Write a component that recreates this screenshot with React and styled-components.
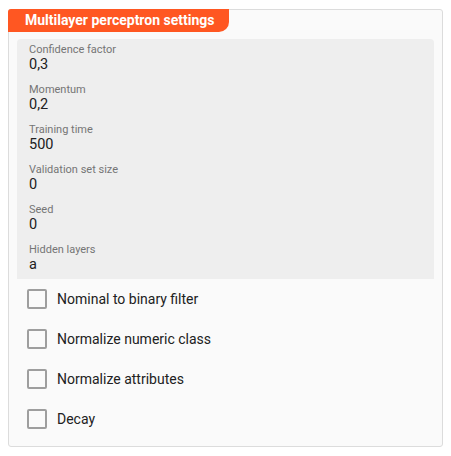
import React from "react";
import styled, { createGlobalStyle } from "styled-components";

const GlobalStyle = createGlobalStyle`
  body {
    margin: 0;
    background: #fff;
    font-family: Roboto, "Liberation Sans", sans-serif;
  }
`;

const Card = styled.div`
  box-sizing: border-box;
  width: 435px;
  height: 438px;
  margin: 9px 0 0 8px;
  background: #fafafa;
  border: 1px solid #dcdcdc;
  border-radius: 3px;
  display: flex;
  flex-direction: column;
`;

const Header = styled.div`
  align-self: flex-start;
  height: 23px;
  margin: -1px 0 0 -1px;
  padding: 0 16px 0 17px;
  width: 221px;
  box-sizing: border-box;
  background: #ff5722;
  color: #fff;
  font-size: 14px;
  font-weight: 700;
  line-height: 23px;
  border-radius: 3px 0 10px 0;
  white-space: nowrap;
`;

const Fields = styled.div`
  margin: 7px 8px 0 8px;
  background: #eeeeee;
  border-radius: 4px 4px 0 0;
  display: flex;
  flex-direction: column;
`;

const Field = styled.div`
  height: 40px;
  box-sizing: border-box;
  padding: 5px 12px 0;
  display: flex;
  flex-direction: column;
`;

const Label = styled.span`
  font-size: 11px;
  color: #757575;
  line-height: 12px;
`;

const Value = styled.span`
  font-size: 14.5px;
  color: #212121;
  line-height: 17px;
`;

const Checks = styled.div`
  display: flex;
  flex-direction: column;
  padding: 0 8px 0 18px;
`;

const CheckRow = styled.label`
  height: 40px;
  display: flex;
  align-items: center;
  gap: 10px;
  font-size: 14px;
  color: #212121;
`;

const Box = styled.span`
  box-sizing: border-box;
  width: 20px;
  height: 20px;
  border: 2px solid #9e9e9e;
  border-radius: 2px;
  background: #fafafa;
`;

const fields = [
  ["Confidence factor", "0,3"],
  ["Momentum", "0,2"],
  ["Training time", "500"],
  ["Validation set size", "0"],
  ["Seed", "0"],
  ["Hidden layers", "a"]
];

const checks = [
  "Nominal to binary filter",
  "Normalize numeric class",
  "Normalize attributes",
  "Decay"
];

export default function App() {
  return (
    <>
      <GlobalStyle />
      <Card>
        <Header>Multilayer perceptron settings</Header>
        <Fields>
          {fields.map(([label, value]) => (
            <Field key={label}>
              <Label>{label}</Label>
              <Value>{value}</Value>
            </Field>
          ))}
        </Fields>
        <Checks>
          {checks.map(c => (
            <CheckRow key={c}>
              <Box />
              {c}
            </CheckRow>
          ))}
        </Checks>
      </Card>
    </>
  );
}
